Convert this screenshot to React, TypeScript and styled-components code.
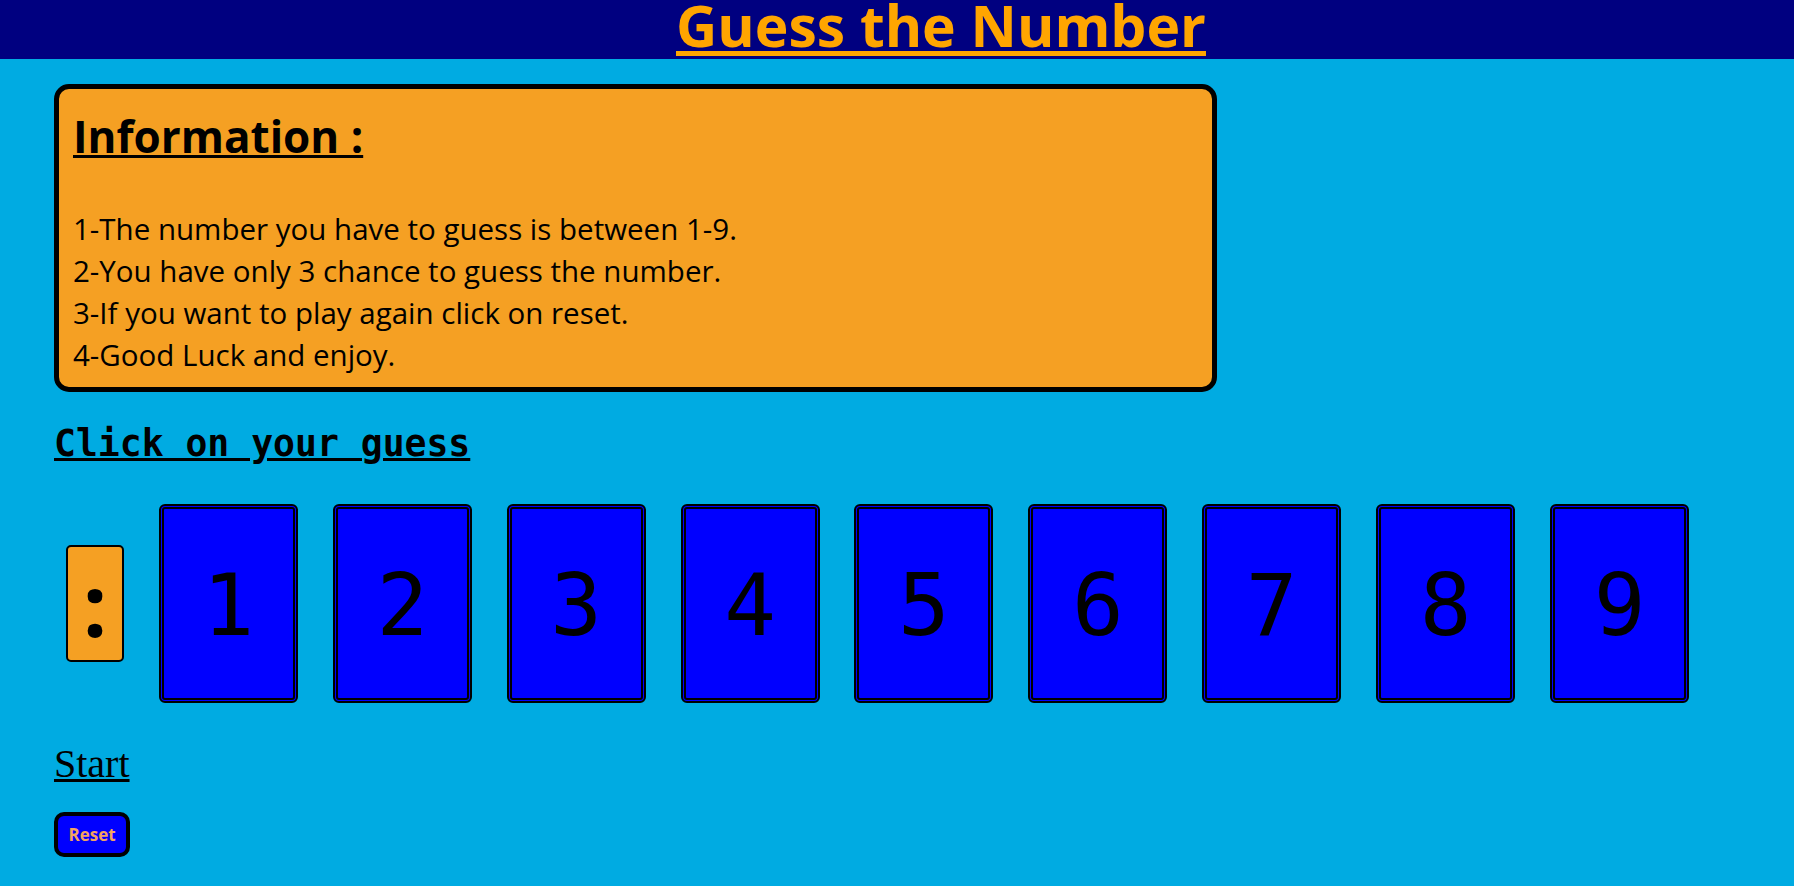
import styled, { createGlobalStyle } from "styled-components";

const GlobalStyle = createGlobalStyle`
  html, body {
    margin: 0;
    padding: 0;
    background: #00abe2;
    min-height: 100%;
  }
  #root {
    min-height: 100vh;
  }
`;

const rules = [
  "1-The number you have to guess is between 1-9.",
  "2-You have only 3 chance to guess the number.",
  "3-If you want to play again click on reset.",
  "4-Good Luck and enjoy.",
];

const numbers = [1, 2, 3, 4, 5, 6, 7, 8, 9];

const App = () => {
  return (
    <>
      <GlobalStyle />
      <Header>
        <Title>Guess the Number</Title>
      </Header>
      <Main>
        <InfoBox>
          <InfoTitle>Information :</InfoTitle>
          <RuleList>
            {rules.map(rule => (
              <Rule key={rule}>{rule}</Rule>
            ))}
          </RuleList>
        </InfoBox>
        <Prompt>Click on your guess</Prompt>
        <CardRow>
          <Result>:</Result>
          {numbers.map(n => (
            <Card key={n} type="button">{n}</Card>
          ))}
        </CardRow>
        <StartLink href="#">Start</StartLink>
        <ResetButton type="button">Reset</ResetButton>
      </Main>
    </>
  );
};

export default App;

/** Styled components */

const Header = styled.header`
  background: #000080;
  height: 59px;
  padding-left: 88px;
  display: flex;
  justify-content: center;
  align-items: flex-start;
`;

const Title = styled.h1`
  margin: 0;
  font-family: "Open Sans", sans-serif;
  font-weight: bold;
  font-size: 57px;
  line-height: 50px;
  color: #ffa500;
  text-decoration: underline;
  text-decoration-thickness: 5px;
  text-underline-offset: 4px;
`;

const Main = styled.main`
  display: flex;
  flex-direction: column;
  align-items: flex-start;
  padding: 25px 0 0 54px;
`;

const InfoBox = styled.section`
  box-sizing: border-box;
  width: 1163px;
  border: 5px solid #000;
  border-radius: 15px;
  background: #f5a023;
  padding: 22px 12px 11px 14px;
  font-family: "Comic Sans MS", "Open Sans", sans-serif;
  color: #000;
`;

const InfoTitle = styled.h2`
  margin: 0 0 47px;
  font-size: 44px;
  line-height: 50px;
  font-weight: bold;
  text-decoration: underline;
  text-decoration-thickness: 3px;
`;

const RuleList = styled.div`
  display: flex;
  flex-direction: column;
`;

const Rule = styled.p`
  margin: 0;
  font-size: 29.5px;
  line-height: 42px;
`;

const Prompt = styled.h3`
  margin: 31px 0 0;
  font-family: "DejaVu Sans Mono", monospace;
  font-weight: bold;
  font-size: 36.4px;
  line-height: 42px;
  text-decoration: underline;
  text-decoration-thickness: 3px;
`;

const CardRow = styled.div`
  display: flex;
  align-items: center;
  gap: 34.9px;
  margin: 39px 0 0 12px;
`;

const Result = styled.div`
  box-sizing: border-box;
  width: 58px;
  height: 117px;
  border: 2px solid #000;
  border-radius: 5px;
  background: #f5a023;
  padding-top: 7px;
  text-align: center;
  font-family: "Open Sans", sans-serif;
  font-weight: bold;
  font-size: 86px;
  line-height: 100px;
  color: #000;
`;

const Card = styled.button`
  box-sizing: border-box;
  width: 139px;
  height: 199px;
  border: 5px double #000;
  border-radius: 6px;
  background: #0000ff;
  padding: 3px 0 0;
  display: flex;
  align-items: center;
  justify-content: center;
  font-family: "DejaVu Sans Mono", monospace;
  font-size: 86px;
  line-height: 86px;
  color: #000;
  cursor: pointer;
`;

const StartLink = styled.a`
  margin-top: 38px;
  font-family: "Liberation Serif", serif;
  font-size: 40px;
  line-height: 46px;
  color: #000;
  text-decoration: underline;
  text-decoration-thickness: 3px;
`;

const ResetButton = styled.button`
  box-sizing: border-box;
  margin-top: 25px;
  width: 76px;
  height: 45px;
  border: 4px solid #000;
  border-radius: 10px;
  background: #0000ff;
  padding: 0;
  font-family: "Open Sans", sans-serif;
  font-weight: bold;
  font-size: 17px;
  color: #f4a460;
  cursor: pointer;
`;
